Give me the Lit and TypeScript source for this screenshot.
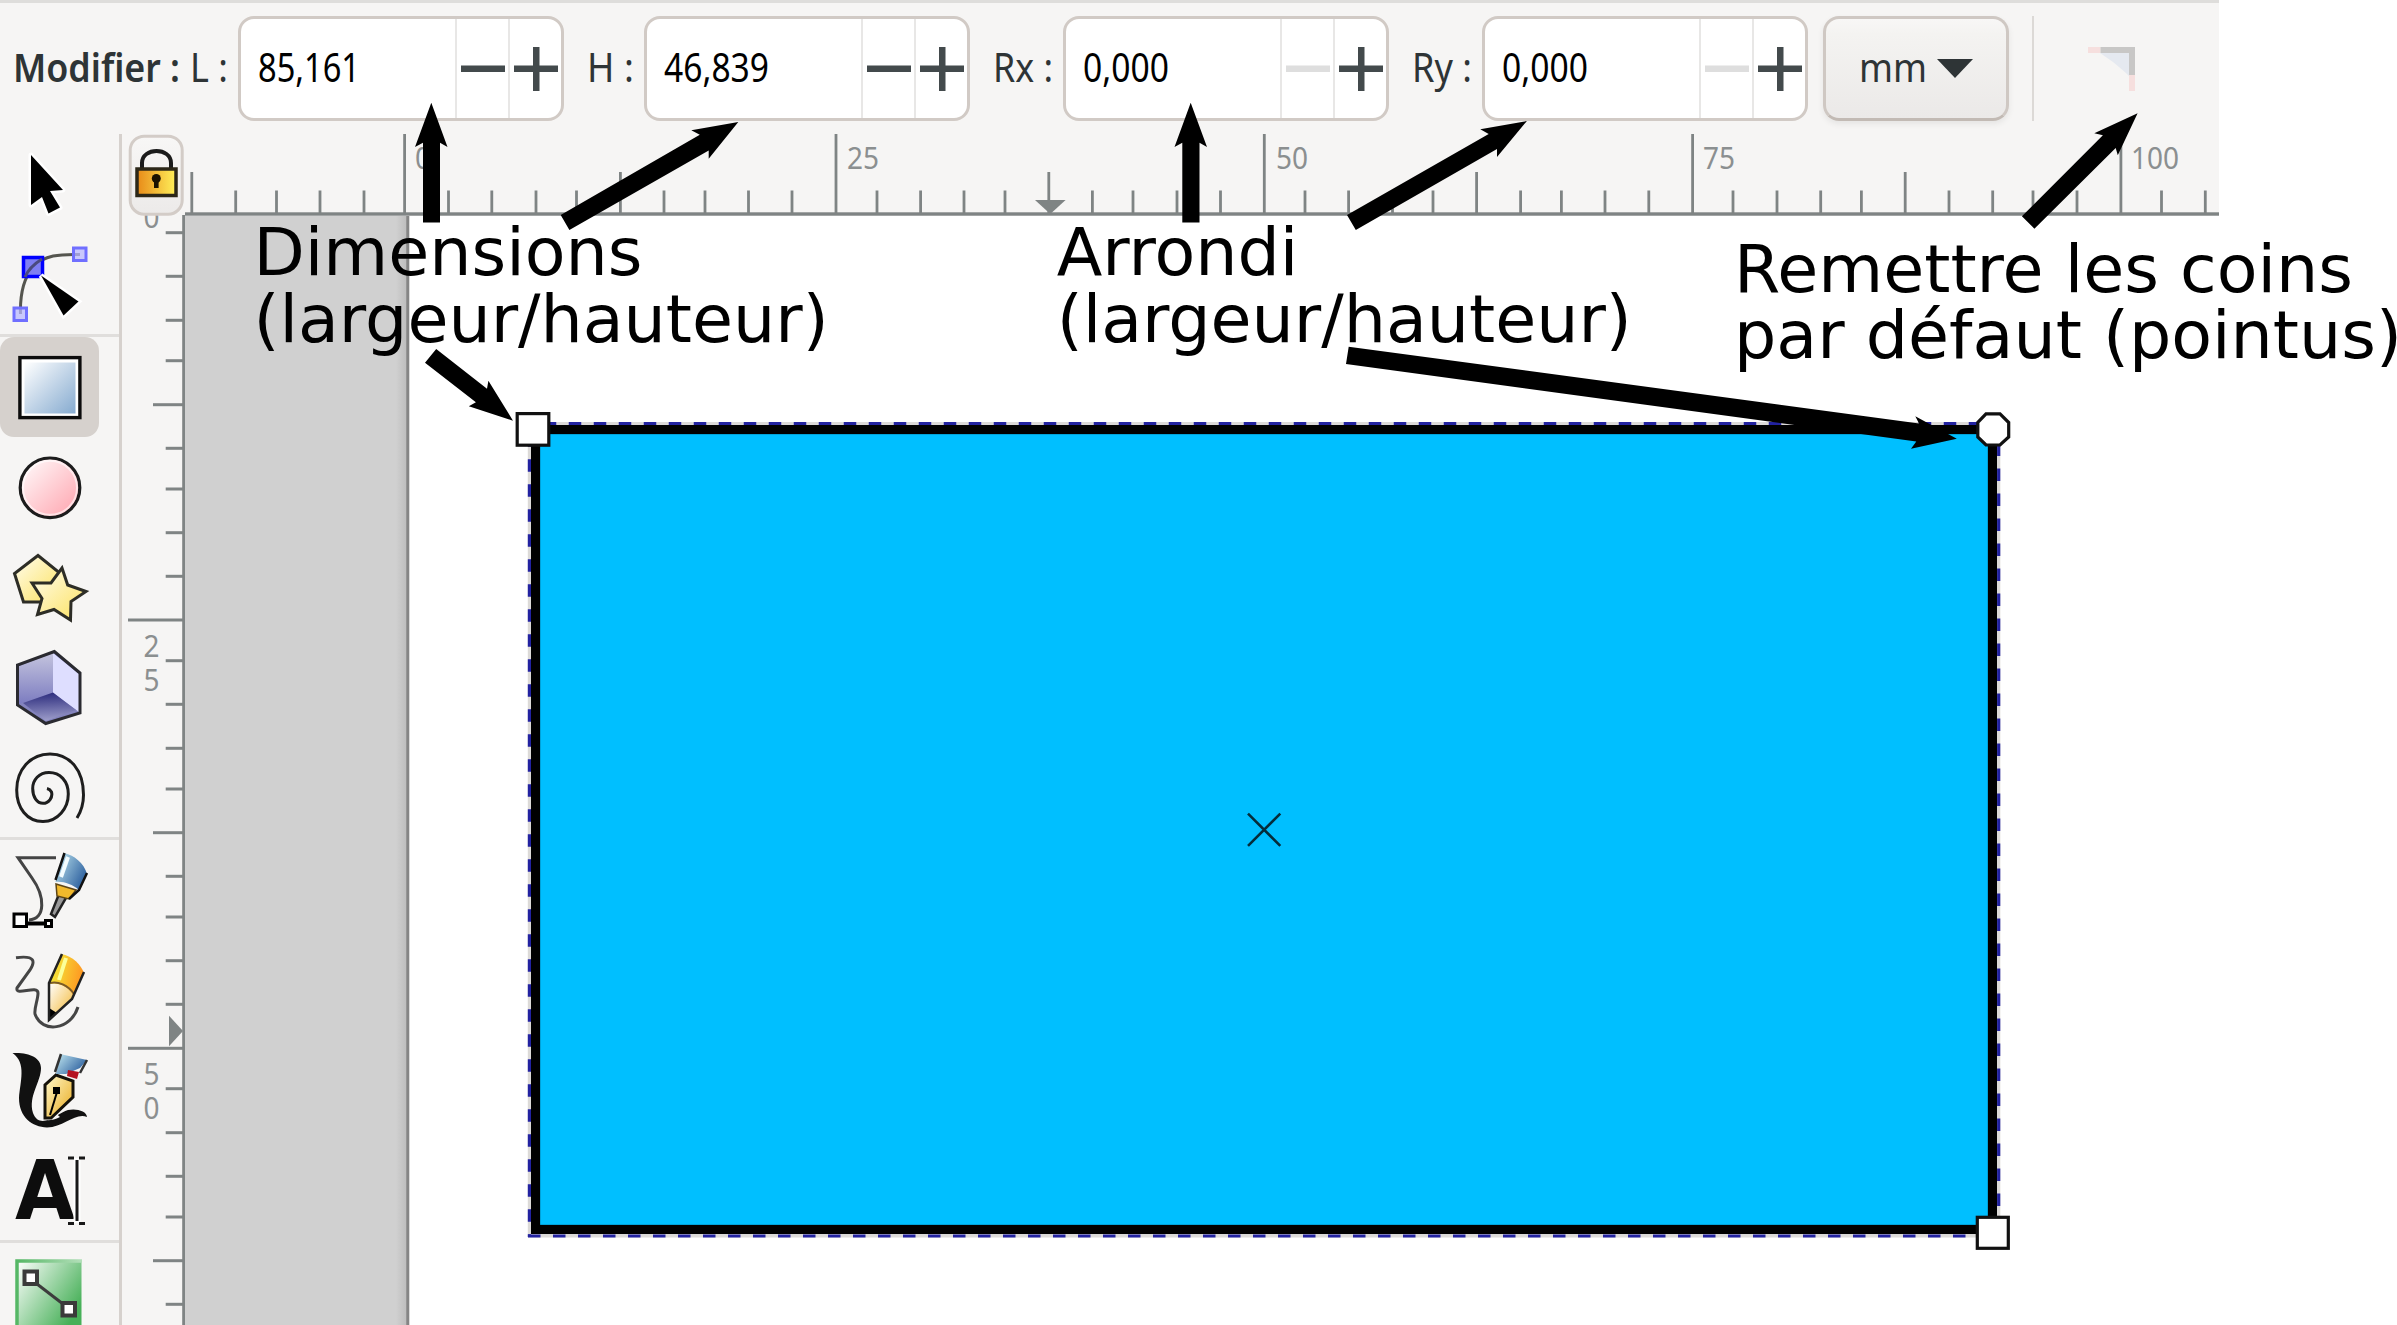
import { LitElement, html, svg, css } from "lit";
import { customElement, property } from "lit/decorators.js";

const H_TICKS = [
  191.8, 235.7, 276.5, 320, 364, 404.6, 448.5, 491.8, 536, 576.5, 620.4, 664, 705, 748.5, 792, 836,
  877, 920.6, 964, 1005, 1048.8, 1092.4, 1133, 1177, 1220.5, 1264.3, 1305, 1348.6, 1392.5, 1433,
  1476.6, 1520.6, 1561.4, 1605, 1648.8, 1692.6, 1733, 1777, 1820.7, 1861.4, 1905.2, 1949, 1992.7,
  2033, 2077, 2120.9, 2161.5, 2205.3,
];
const V_TICKS = [
  232.7, 276.3, 320.3, 360.7, 404.7, 448.3, 489, 532.7, 576.3, 620, 660.7, 704.3, 748.3, 789, 832.7,
  876.3, 917, 960.7, 1004.3, 1048.3, 1088.7, 1132.7, 1176.3, 1217, 1260.7, 1304.3,
];

/** One line of interface text, fitted to a given width. */
@customElement("ui-text")
class UiText extends LitElement {
  @property() text = "";
  @property({ type: Number }) width = 0;
  @property({ type: Boolean }) bold = false;
  @property() color = "#2e3436";
  static styles = css`
    :host { display: block; flex: none; }
    svg { display: block; overflow: visible; font-family: "Noto Sans", "Open Sans", sans-serif; }
  `;
  render() {
    return html`<svg width=${this.width} height="105">
      <text x="0" y="65.5" font-size="40" font-weight=${this.bold ? 600 : 400} fill=${this.color}
        textLength=${this.width} lengthAdjust="spacingAndGlyphs">${this.text}</text>
    </svg>`;
  }
}

/** Number field with minus and plus buttons. */
@customElement("spin-field")
class SpinField extends LitElement {
  @property() value = "";
  @property({ type: Number }) textWidth = 0;
  @property({ type: Boolean }) atMin = false;
  static styles = css`
    :host { display: block; flex: none; }
    .box {
      box-sizing: border-box; width: 326px; height: 105px; display: flex; background: #fff;
      border: 3px solid #d1cac5; border-radius: 16px;
    }
    .value { flex: 1; padding-left: 17px; margin-top: -3px; }
    .step { box-sizing: border-box; width: 53px; border-left: 2px solid #e8e7e6; display: flex; align-items: center; justify-content: center; }
    .step svg { margin-top: 1px; flex: none; }
  `;
  render() {
    return html`<div class="box">
      <div class="value"><ui-text text=${this.value} width=${this.textWidth} color="#000"></ui-text></div>
      <div class="step"><svg width="44" height="44"><rect x="0" y="18.5" width="44" height="6.5" fill=${this.atMin ? "#dedede" : "#434a4c"} /></svg></div>
      <div class="step"><svg width="44" height="44"><path d="M0 18.5H19V0H25.5V18.5H44V25H25.5V44H19V25H0Z" fill="#434a4c" /></svg></div>
    </div>`;
  }
}

@customElement("tool-bar")
class ToolBar extends LitElement {
  static styles = css`
    :host { display: block; }
    .bar {
      box-sizing: border-box; width: 2219px; height: 134px; display: flex; align-items: flex-start;
      padding: 13px 0 0 13px; background: #f6f5f4; border-top: 3px solid #dedddb;
    }
    .lead { width: 225px; display: flex; gap: 10px; flex: none; }
    .label { box-sizing: border-box; padding-left: 23px; flex: none; }
    .l1 { width: 80px; }
    .l2 { width: 93px; }
    .unit {
      box-sizing: border-box; width: 186px; height: 105px; margin-left: 15px; flex: none; display: flex;
      padding-left: 33px; border: 3px solid #cfc8c3; border-bottom-color: #c2bab4; border-radius: 16px;
      background: linear-gradient(#f8f7f6, #f4f3f1 15%, #ebe9e8); box-shadow: 0 3px 6px rgba(0, 0, 0, 0.07);
    }
    .unit ui-text { margin-top: -3px; }
    .unit svg { margin: 39px 0 0 10px; }
    .rule { width: 2px; height: 105px; margin-left: 23px; background: #dcd9d6; flex: none; }
    .corner { margin: 31px 0 0 54px; flex: none; }
  `;
  render() {
    return html`<div class="bar">
      <div class="lead">
        <ui-text text="Modifier :" width="167" bold></ui-text>
        <ui-text text="L :" width="38"></ui-text>
      </div>
      <spin-field value="85,161" textWidth="102"></spin-field>
      <div class="label l1"><ui-text text="H :" width="47"></ui-text></div>
      <spin-field value="46,839" textWidth="105"></spin-field>
      <div class="label l2"><ui-text text="Rx :" width="60"></ui-text></div>
      <spin-field value="0,000" textWidth="86" atMin></spin-field>
      <div class="label l2"><ui-text text="Ry :" width="60"></ui-text></div>
      <spin-field value="0,000" textWidth="86" atMin></spin-field>
      <div class="unit">
        <ui-text text="mm" width="68"></ui-text>
        <svg width="36" height="20"><path d="M0 1H36L18 20Z" fill="#2e3436" /></svg>
      </div>
      <div class="rule"></div>
      <svg class="corner" width="47" height="44">
        <path d="M12 6H41V29C36 24 30 19 25 15Z" fill="#e5e9f0" />
        <path d="M0 0H12.5V6H0ZM41 28H47V44H41Z" fill="#f6dfde" />
        <path d="M12.5 0H47V28H41V6H12.5Z" fill="#c8c7c6" />
      </svg>
    </div>`;
  }
}

const TOOLS = [
  svg`<path d="M31 155L63 190L50 191L60 207.500L48.500 213.500L42 197L31 205Z" fill="#000" stroke="#fff" stroke-width="5" stroke-linejoin="round" paint-order="stroke" />`,
  svg`<path d="M20.500 314C20 296 23 279 33 267C44 255 60 254 80 254.500" fill="none" stroke="#55554f" stroke-width="3" />
    <g fill="#b9b8ff" fill-opacity=".75" stroke="#706fff" stroke-width="3"><rect x="14" y="308" width="12.500" height="12.500" /><rect x="73.500" y="248" width="12.500" height="12.500" /></g>
    <rect x="23.500" y="257.500" width="19" height="19" fill="#7f7ff2" stroke="#00f" stroke-width="3.500" />
    <path d="M25 277C28 270 34 264 42 259" fill="none" stroke="#4a4a80" stroke-width="3" />
    <path d="M41 275.500L78.500 301.500L63.500 315.500Z" fill="#000" stroke="#fff" stroke-width="5" paint-order="stroke" />`,
  svg`<rect x="19.900" y="357.600" width="60" height="60" fill="#fff" stroke="#0c0c0c" stroke-width="3.400" /><rect x="24.500" y="362.500" width="51" height="51" fill="url(#blue)" />`,
  svg`<circle cx="50" cy="487.800" r="29.800" fill="url(#pink)" stroke="#1c1c1c" stroke-width="3.200" /><circle cx="50" cy="487.800" r="27" fill="none" stroke="#fff" stroke-opacity=".6" stroke-width="2" />`,
  svg`<g fill="url(#yellow)" stroke="#2d2d26" stroke-width="3"><path d="M38 555.500L61 574L52 602H23.500L14.500 573.500Z" />
    <path d="M62 568L67.700 585L86 591.500L71 601.500L70.500 620L54 609.500L37.500 614.500L42 598.500L32 583H51Z" /></g>`,
  svg`<path d="M54.300 651.500L80 673V713L45.700 723.500L17.500 705V665Z" fill="#8484be" />
    <path d="M53 653L19 666V704L53 693Z" fill="url(#boxl)" /><path d="M53 653L79 674V712L53 693Z" fill="#dedeff" />
    <path d="M53 692.500L76 710L45.700 721L23 703Z" fill="url(#boxb)" />
    <path d="M54.300 651.500L80 673V713L45.700 723.500L17.500 705V665Z" fill="none" stroke="#2a2a30" stroke-width="3" />`,
  svg`<path d="M77 818C82 810 83.500 803 83.500 795C83.500 770 70 754 50 754C30 754 16.700 770 16.700 790C16.700 808 27 821.500 43 821.500C58 821.500 68.300 808 68.300 794C68.300 781 60 772.500 49 772.500C39 772.500 32.700 780 32.700 788.500C32.700 797 37 803.300 43 803.300C49 803.300 53 797 51.500 792C50.500 790 49 789 47 788.500" fill="none" stroke="#1e1e1e" stroke-width="3" />`,
  svg`<path d="M56 857.700H18L32 878C45 896 46 919 29 920" fill="none" stroke="#444" stroke-width="3" />
    <path d="M28 923.500H45" stroke="#000" stroke-width="4" /><g fill="#fff" stroke="#000" stroke-width="3"><rect x="14" y="914" width="12.500" height="12.500" /><rect x="45.500" y="920.500" width="6" height="6" /></g>
    <path d="M59 894L66 898L55 917L51 914Z" fill="#999" stroke="#222" stroke-width="2.500" />
    <path d="M56 884L76 890L69 899L57 896Z" fill="#f1b92c" stroke="#5e4616" stroke-width="1.500" />
    <path d="M63.500 853C74 855 84 863 87 874L79 890C72 884 63 881 55.500 882Z" fill="url(#pen)" /><path d="M64.500 853L55.500 880M87 873L79 890L69 899" stroke="#111" stroke-width="2.500" fill="none" />
    <path d="M68 857L61 877" stroke="#f2fcff" stroke-width="4" />`,
  svg`<path d="M16 957.700C36 955 35 962 30 970L17 988C15 997 38 984 38 993C38 1000 34 1008 35 1014C42 1034 71 1030 78 1007" fill="none" stroke="#454545" stroke-width="3" />
    <path d="M61 954C73 956 81 965 84 973L72 999L50 1020L49 983Z" fill="url(#pencil)" />
    <path d="M49 984C58 982 68 986 73 995L71 1001L50 1018Z" fill="url(#wood)" /><path d="M50 983C58 981 68 985 74 994" stroke="#7a5a28" stroke-width="2" fill="none" />
    <path d="M49 1008L57 1013L49.500 1021Z" fill="#000" /><path d="M62 954L49 983V1020L72 999L84 972" fill="none" stroke="#222" stroke-width="2.500" />
    <path d="M66 958L59 980" stroke="#fbff9a" stroke-width="4" />`,
  svg`<path d="M12.500 1053C28 1052 41 1057 41 1068C41 1082 28 1096 33 1113C40 1131 58 1113 68 1110C76 1108 87 1111 87 1117C76 1112 64 1127 47 1127.500C32 1127 19 1117 19 1098C20 1082 27 1063 12.500 1053Z" fill="#111" />
    <path d="M33 1100C35 1118 44 1125 60 1117L50 1108Z" fill="#f6f5f4" />
    <path d="M45 1118V1085L56 1075L73 1081V1097L51 1118Z" fill="url(#nib)" stroke="#15120a" stroke-width="3" />
    <path d="M50 1115L57 1092" stroke="#000" stroke-width="2" /><rect x="53" y="1087" width="7" height="7" fill="#000" />
    <path d="M60 1054L56 1074L66 1074L80 1068L87 1060Z" fill="url(#pen)" /><path d="M61 1054L55 1072M87 1060L80 1073" stroke="#333" stroke-width="2.500" />
    <path d="M68 1070L79 1072L77 1079L67 1076Z" fill="#b51422" />`,
  svg`<text x="15" y="1219" class="glyph" textLength="60" lengthAdjust="spacingAndGlyphs">A</text>
    <path d="M77 1158V1223" stroke="#fff" stroke-width="7" /><path d="M77 1160V1221M68 1158H74M79 1158H85M68 1223.500H74M79 1223.500H85" stroke="#181818" stroke-width="3" />`,
  svg`<rect x="17" y="1261" width="64.500" height="76" fill="url(#green)" /><path d="M17 1350V1261H82" fill="none" stroke="url(#edge)" stroke-width="3.500" />
    <path d="M37 1284L63 1304" stroke="#3c3c3c" stroke-width="3" /><g fill="#fff" stroke="#3a3a3a" stroke-width="4"><rect x="24.500" y="1271.500" width="12.500" height="12.500" /><rect x="62.500" y="1303" width="12.500" height="12.500" /></g>`,
];

const grad = (id: string, a: string, b: string, x2 = 1, y2 = 1) =>
  svg`<linearGradient id=${id} x1="0" y1="0" x2=${x2} y2=${y2}><stop stop-color=${a} /><stop offset="1" stop-color=${b} /></linearGradient>`;

@customElement("tool-box")
class ToolBox extends LitElement {
  static styles = css`
    :host { display: block; flex: none; }
    .box { box-sizing: border-box; width: 122px; height: 1191px; overflow: hidden; background: #f6f5f4; border-right: 3px solid #d6d1cd; }
    .tool { width: 99px; height: 100px; }
    .tool.on { background: #d6d1cd; border-radius: 14px; }
    .sep { height: 3px; background: #e0dedc; }
    svg { display: block; }
    .glyph { font: bold 82px "DejaVu Sans", sans-serif; fill: #0d0d0d; }
  `;
  render() {
    let top = 134;
    return html`<div class="box">
      ${TOOLS.map((icon, i) => {
        const sep = i === 2 || i === 7 || i === 11;
        if (sep) top += 3;
        const y = top;
        top += 100;
        return html`${sep ? html`<div class="sep"></div>` : ""}
          <div class="tool ${i === 2 ? "on" : ""}"><svg width="98" height="100" viewBox="0 ${y} 98 100">
            <defs>
              ${grad("blue", "#ffffff", "#86abd0")}${grad("pink", "#ffffff", "#ffa0ab")}${grad("yellow", "#fffdf0", "#fce15c")}
              ${grad("boxl", "#c4c4de", "#7c7cc0", 0, 1)}${grad("boxb", "#27277a", "#9a9ac8", 0.1, 1)}
              ${grad("pen", "#c4eaf2", "#2f62a0", 1, 0.6)}${grad("pencil", "#f2f63c", "#ff9020", 1, 0.4)}
              ${grad("wood", "#ffffff", "#f3b52c")}${grad("nib", "#fffad0", "#e8a818")}
              ${grad("green", "#ffffff", "#47b058", 0.9, 0.7)}${grad("edge", "#55b765", "#b4dfba", 1, 0)}
            </defs>${icon}</svg></div>`;
      })}
    </div>`;
  }
}

@customElement("side-ruler")
class SideRuler extends LitElement {
  static styles = css`
    :host { display: block; flex: none; }
    .side { width: 63px; height: 1191px; background: #f6f5f4; }
    svg { display: block; }
    text { font: 31px "Noto Sans", "Open Sans", sans-serif; fill: #8b8f90; }
  `;
  render() {
    const num = (t: string, y: number) => svg`<text x="143.500" y=${y} textLength="16" lengthAdjust="spacingAndGlyphs">${t}</text>`;
    return html`<div class="side"><svg width="63" height="1191" viewBox="122 134 63 1191">
      ${num("0", 227.5)}
      <defs><linearGradient id="btn" x2="0" y2="1"><stop stop-color="#f8f7f6" /><stop offset="1" stop-color="#eceae9" /></linearGradient>
        <linearGradient id="gold"><stop stop-color="#e88a18" /><stop offset="1" stop-color="#fff05a" /></linearGradient></defs>
      <rect x="130.200" y="136.200" width="52" height="78" rx="14" fill="url(#btn)" stroke="#d3ccc7" stroke-width="3" />
      <path d="M142 170V163C142 147 171 147 171 163V170" fill="none" stroke="#1b1b1b" stroke-width="4" />
      <rect x="137" y="169" width="39" height="26.500" fill="url(#gold)" stroke="#2c2718" stroke-width="3.500" />
      <circle cx="156.300" cy="178.500" r="4.500" fill="#1c1200" /><rect x="154" y="179" width="4.600" height="9" fill="#1c1200" />
      <g fill="#7f8484">
        ${V_TICKS.map((y, i) => {
          const x = i % 10 === 9 ? 128 : i % 10 === 4 ? 153 : 165.7;
          return svg`<rect x=${x} y=${y - 1.5} width=${183 - x} height="3" />`;
        })}
        <rect x="182.200" y="215" width="2.800" height="1110" />
        <path d="M169 1015.700L183 1031L169 1046.300Z" />
      </g>
      ${num("2", 656.5)}${num("5", 690.5)}${num("5", 1085)}${num("0", 1118.5)}
    </svg></div>`;
  }
}

@customElement("top-ruler")
class TopRuler extends LitElement {
  static styles = css`
    :host { display: block; }
    .top { width: 2034px; height: 82px; background: #f6f5f4; }
    svg { display: block; }
    text { font: 31px "Noto Sans", "Open Sans", sans-serif; fill: #8b8f90; }
  `;
  render() {
    const num = (t: string, x: number, w: number) => svg`<text x=${x} y="169" textLength=${w} lengthAdjust="spacingAndGlyphs">${t}</text>`;
    return html`<div class="top"><svg width="2034" height="82" viewBox="185 134 2034 82">
      <g fill="#7f8484">
        ${H_TICKS.map((x, i) => {
          const y = i % 10 === 5 ? 134 : i % 10 === 0 ? 172 : 190.5;
          return svg`<rect x=${x - 1.4} y=${y} width="2.800" height=${213 - y} />`;
        })}
        <rect x="185" y="212.300" width="2034" height="3.400" />
        <path d="M1035 200H1065.600L1050.300 214Z" />
      </g>
      ${num("0", 415, 16)}${num("25", 847, 32)}${num("50", 1276, 32)}${num("75", 1703, 32)}${num("100", 2131, 48)}
    </svg></div>`;
  }
}

/** Page with the selected rectangle and its handles. */
@customElement("draw-canvas")
class DrawCanvas extends LitElement {
  static styles = css`
    :host { display: block; }
    svg { display: block; }
  `;
  render() {
    return html`<svg width="2212" height="1109" viewBox="185 216 2212 1109">
      <defs><linearGradient id="shade"><stop stop-color="#d0d0d0" /><stop offset="1" stop-color="#bcbcbc" /></linearGradient></defs>
      <rect x="185" y="216" width="222" height="1109" fill="#d0d0d0" />
      <rect x="396" y="216" width="11" height="1109" fill="url(#shade)" />
      <rect x="406.300" y="216" width="3" height="1109" fill="#858585" />
      <rect x="535.500" y="429.500" width="1457" height="800" fill="#00bfff" stroke="#000" stroke-width="9.300" />
      <g stroke="#dcdad8" stroke-width="3.200"><path d="M528 423.500H1999M529.400 422V1237M1998.700 422V1237M528 1236H2000" /></g>
      <g stroke="#2222a0" stroke-width="3.200" stroke-dasharray="12.500 12.500">
        <path d="M543.750 423.500H1999" /><path d="M529.400 434.300V1237" /><path d="M1998.700 443.500V1237" /><path d="M528 1236H2000" />
      </g>
      <path d="M1248 813.700L1280.300 845.800M1280.300 813.700L1248 845.800" stroke="#052c3a" stroke-width="2.600" />
      <g fill="#fff" stroke="#111" stroke-width="3.200">
        <rect x="517.200" y="413.600" width="31.600" height="31.600" /><rect x="1977.300" y="1217.300" width="31" height="31" />
        <path d="M1986 413.800H2000L2008.700 422.500V437L2000 445H1986L1977.800 437V422.500Z" />
      </g>
    </svg>`;
  }
}

/** Captions and arrows drawn over the editor. */
@customElement("note-layer")
class NoteLayer extends LitElement {
  static styles = css`
    svg { position: absolute; left: 0; top: 0; }
    text { font: 66.67px "DejaVu Sans", sans-serif; fill: #000; }
  `;
  render() {
    return html`<svg width="2397" height="1325">
      <path d="M431.300 102.700L447.500 147L440 142.700V222.500H423V142.700L415 147Z" />
      <path d="M738.300 122L708.700 158.700V150.500L569.400 230L560.700 215L699.800 134.700L691.300 130.300Z" />
      <path d="M1190.700 102.700L1207 147L1199.500 142.700V222.500H1182.300V142.700L1174.500 147Z" />
      <path d="M1526.900 121L1497 157V149L1355.800 230L1347 215L1488.700 134L1480.300 129.300Z" />
      <path d="M2137.600 113.300L2117.800 155.300L2115.700 148L2034.400 228.700L2021.900 216.300L2102.900 135.300L2094.300 133.300Z" />
      <path d="M513 420.700L468.800 406.300L475.900 402.300L425 362.700L436.200 349L487 388.700L488.400 380.700Z" />
      <path d="M1956.800 438.700L1911 448.700L1916.300 441.500L1346 364L1348.700 346.700L1919 423.500L1915.300 416.300Z" />
      <text x="253.500" y="275">Dimensions</text><text x="253.500" y="341.700">(largeur/hauteur)</text>
      <text x="1056.700" y="275">Arrondi</text><text x="1056.700" y="341.700">(largeur/hauteur)</text>
      <text x="1734" y="291.700">Remettre les coins</text><text x="1734" y="358.300">par défaut (pointus)</text>
    </svg>`;
  }
}

@customElement("app-root")
class AppRoot extends LitElement {
  static styles = css`
    :host { display: block; }
    .app { position: relative; width: 2397px; height: 1325px; overflow: hidden; background: #fff; }
    .body { display: flex; }
  `;
  render() {
    return html`<div class="app">
      <tool-bar></tool-bar>
      <div class="body">
        <tool-box></tool-box>
        <side-ruler></side-ruler>
        <div>
          <top-ruler></top-ruler>
          <draw-canvas></draw-canvas>
        </div>
      </div>
      <note-layer></note-layer>
    </div>`;
  }
}
